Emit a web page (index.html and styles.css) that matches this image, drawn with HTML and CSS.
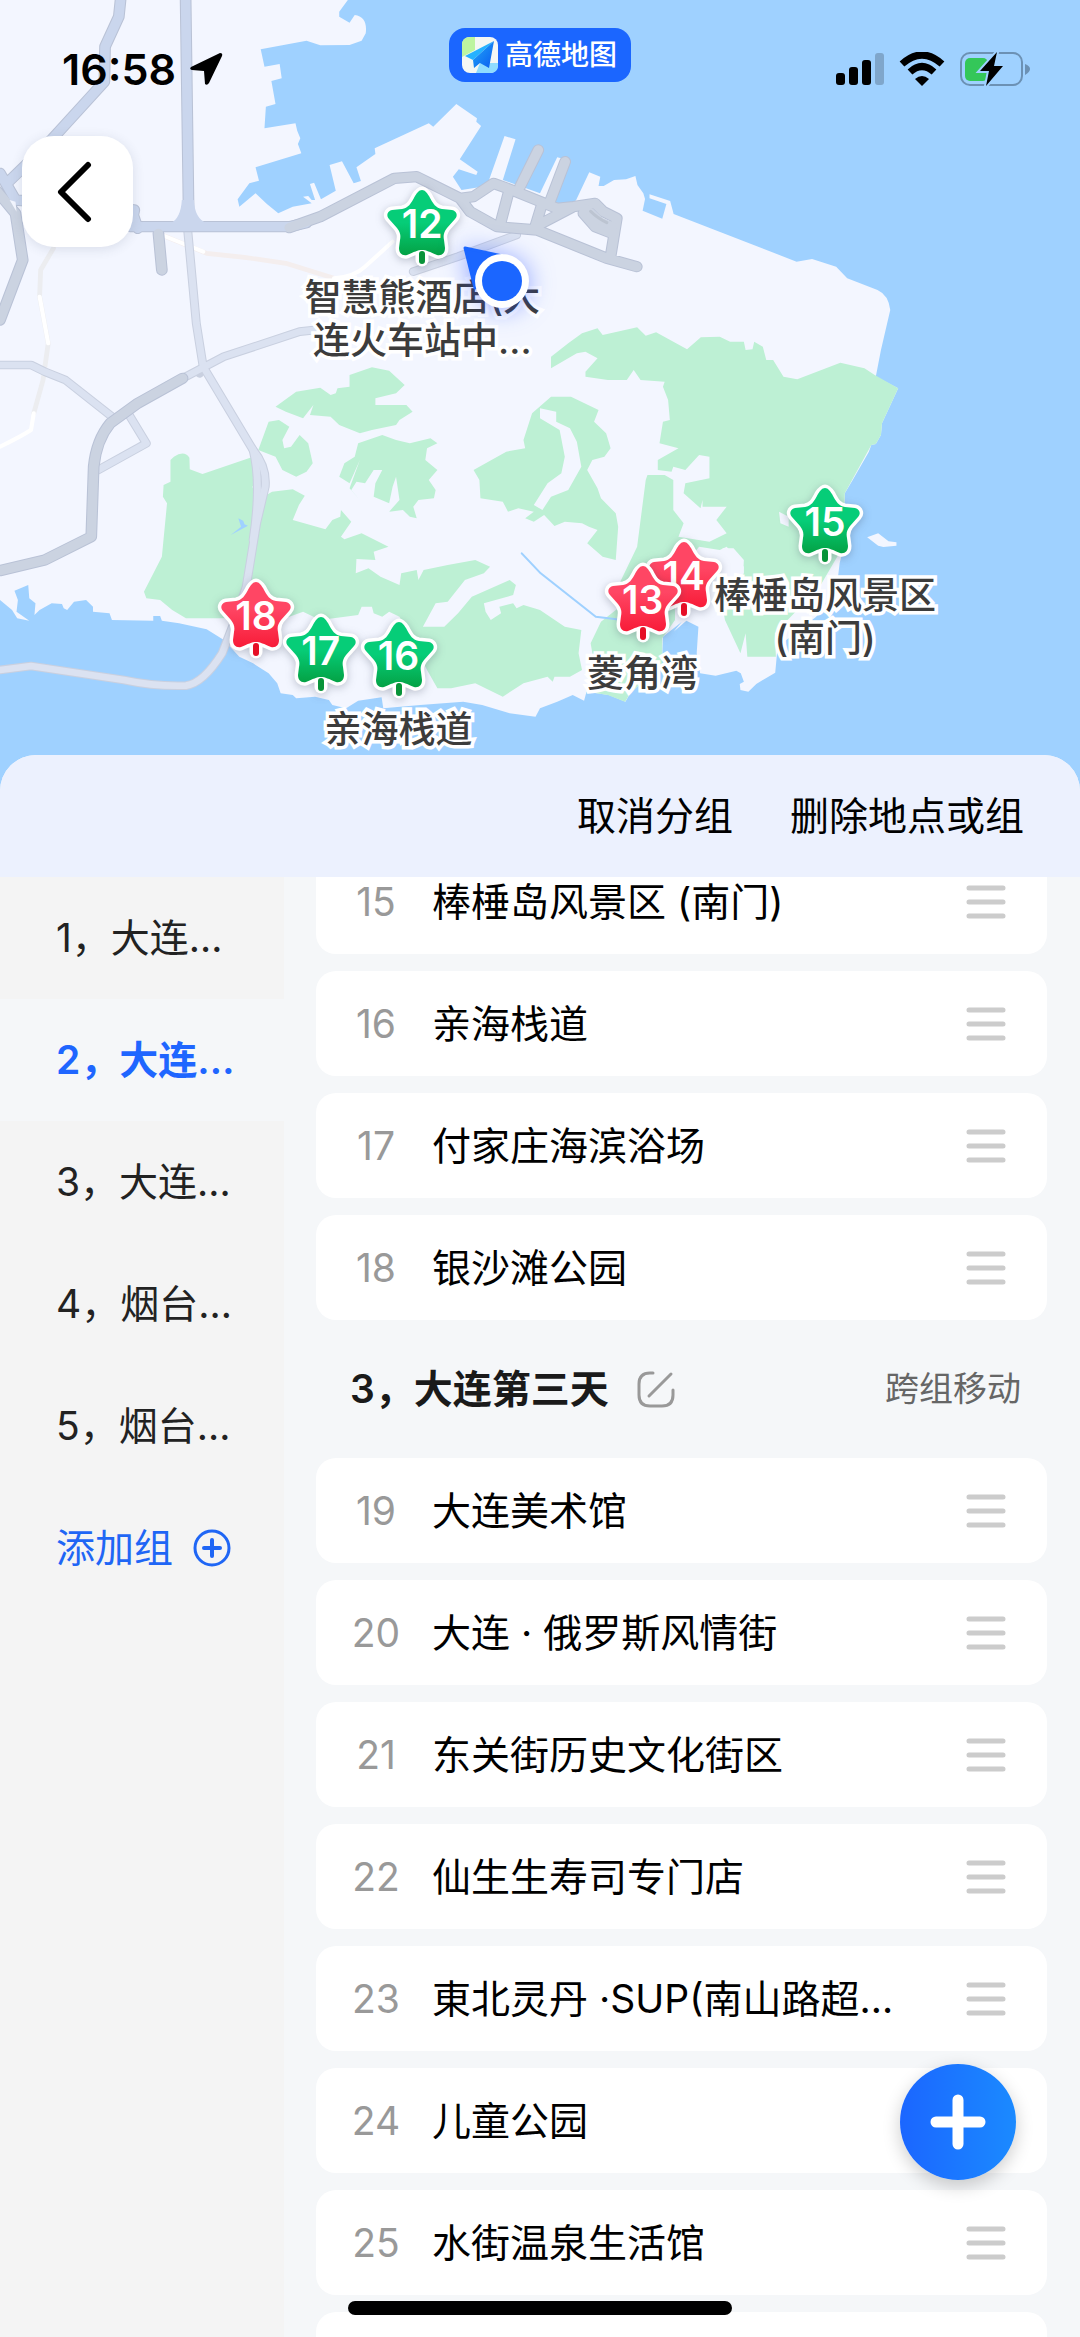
FILE: index.html
```html
<!DOCTYPE html>
<html lang="zh-CN">
<head>
<meta charset="utf-8">
<meta name="viewport" content="width=device-width, initial-scale=1">
<title>高德地图</title>
<link rel="stylesheet" href="styles.css">
</head>
<body>
<svg class="defs" aria-hidden="true">
  <defs>
    <linearGradient id="green" x1="0" y1="0" x2="0" y2="1"><stop offset=".5" stop-color="#06cd78"/><stop offset="1" stop-color="#04a245"/></linearGradient>
    <linearGradient id="red" x1="0" y1="0" x2="0" y2="1"><stop offset=".4" stop-color="#ff4664"/><stop offset="1" stop-color="#f81c38"/></linearGradient>
    <linearGradient id="plane" x1="0" y1="0" x2="1" y2="1"><stop offset="0" stop-color="#20a8f8"/><stop offset="1" stop-color="#0b5cf0"/></linearGradient>
    <path id="star" d="M42 6C45 6 47 9 49 12C53 20 56 24 62 25L72 26C77 27 78 32 75 35L67 44C64 48 63 51 64 56L65 64C65 69 62 72 57 71C50 68 46 66 42 66C38 66 34 68 27 71C22 72 19 69 19 64L20 56C21 51 20 48 17 44L9 35C6 32 7 27 12 26L22 25C28 24 31 20 35 12C37 9 39 6 42 6Z"/>
    <symbol id="pin-green" viewBox="0 0 84 88">
      <path d="M42 68V76" stroke="#fff" stroke-width="13" stroke-linecap="round"/>
      <use href="#star" fill="#fff" stroke="#fff" stroke-width="7"/>
      <path d="M42 70V77" stroke="#089339" stroke-width="6" stroke-linecap="round"/>
      <use href="#star" fill="url(#green)"/>
    </symbol>
    <symbol id="pin-red" viewBox="0 0 84 88">
      <path d="M42 68V76" stroke="#fff" stroke-width="13" stroke-linecap="round"/>
      <use href="#star" fill="#fff" stroke="#fff" stroke-width="7"/>
      <path d="M42 70V77" stroke="#e60f26" stroke-width="6" stroke-linecap="round"/>
      <use href="#star" fill="url(#red)"/>
    </symbol>
    <symbol id="handle" viewBox="0 0 40 34"><path d="M3 3H37M3 17H37M3 31H37" stroke="#ccc" stroke-width="5" stroke-linecap="round"/></symbol>
  </defs>
</svg>
<div class="app">
  <section class="map" aria-label="地图">
    <svg class="terrain" viewBox="0 0 1080 790" preserveAspectRatio="xMidYMin slice" aria-hidden="true">
      <g transform="scale(.34439 .33333)" fill="none" stroke-linejoin="round" stroke-linecap="round">
        <path fill="#f3f6ff" d="M0 0H1010L985 35V50L1015 68L1030 45Q1068 50 1062 100L1050 122L1015 135L930 136L890 122L757 148L768 200L812 192L818 235L788 243L800 312L772 320L768 385L858 370L863 392L872 415L865 432L875 460L742 502L752 542L724 550L690 598L695 620L742 580L775 612L808 640L850 620L905 610L880 590L895 588L905 600H915L900 552L912 548L932 598L975 572L957 495L993 484L1027 550L1048 543L1035 502L1090 462L1088 445L1245 370L1258 380L1325 312L1385 355L1383 365L1397 378L1335 478L1387 515L1383 525L1332 508L1315 530L1340 570L1400 560L1420 540L1465 408L1497 418L1460 540L1568 580L1618 472L1640 478L1613 605L1648 625L1673 600L1711 517L1743 530L1738 558H1753L1783 540L1818 538L1845 528L1851 555L1868 580L1873 597L1866 632L1923 656L1935 612L1886 595V583L1946 603L1956 642L2313 785L2358 777L2428 800L2460 835L2548 870Q2580 885 2585 930L2558 1050L2543 1130L2608 1165L2561 1270L2558 1305L2543 1332L2530 1335L2523 1355L2476 1440L2453 1480L2450 1640L2438 1690L2430 1760L2370 1850L2258 1940L2251 2018L2196 2052L2173 2075L2150 2070L2148 2052L2160 2045L2151 2020L2138 2012L2078 2027L2033 2020L2023 1960L2028 1880L1993 1862L1956 1895L1980 1865L1925 1910L1922 1990L1830 2080L1816 2105L1768 2085L1703 2075L1696 2102L1663 2085L1618 2105L1568 2125L1555 2150L1480 2140L1400 2115L1345 2105L1220 2115L1113 2125L1108 2092L1040 2102L1005 2125L965 2115L955 2100L915 2090L860 2095L850 2085L815 2080L805 2050L780 2020L735 1990L695 1970L650 1920L600 1888L520 1870L470 1862L465 1848H445V1862L325 1860L318 1840L270 1835V1820L250 1800L215 1805L195 1830L185 1825L180 1812L150 1810L115 1830L100 1845L103 1810L85 1795L82 1755L42 1772L52 1800L48 1835L85 1862L50 1855L35 1830L0 1800Z"/>
        <path fill="#f3f6ff" d="M2518 1612L2550 1600L2580 1624L2603 1627V1637L2565 1641L2550 1637Z"/>
        <g fill="#bdf0d4">
          <path d="M495 1380L505 1370Q535 1350 550 1373L551 1408L588 1422L735 1370L750 1400L740 1450L733 1460L740 1480L765 1490L790 1475L850 1468L885 1487L868 1515L850 1560L945 1588L965 1560L988 1550L990 1530L1020 1565L990 1610L1000 1618L1050 1600L1128 1640L1085 1655L1090 1680L1035 1677L1033 1720L1070 1705L1105 1730L1160 1755L1165 1720L1210 1710L1215 1740L1230 1710L1300 1695L1380 1680L1423 1700L1405 1720L1350 1740L1300 1805L1265 1810L1228 1880H1290L1330 1840L1370 1790L1480 1740L1498 1755L1490 1785L1405 1810L1410 1835L1425 1860L1455 1840L1450 1820L1490 1810L1500 1825L1520 1815L1568 1830L1640 1880L1688 1890L1680 1960L1690 2010L1655 2030H1610L1605 2045L1590 2030L1520 2050L1460 2090L1380 2050L1310 2065H1270L1240 2010L1160 1850L1130 1835L1110 1850L1085 1840L1080 1820H1050L1040 1845L930 1860L880 1835L840 1850L640 1855H540L500 1830L465 1800L425 1795L418 1775L470 1670L485 1510L473 1490L475 1455L495 1445Z"/>
          <path d="M780 1265L810 1260L840 1280L820 1320L825 1345L845 1340L870 1305L895 1330L908 1390L890 1415L860 1430L820 1410L800 1370L750 1350Z"/>
          <path d="M800 1220L860 1175L930 1163L960 1185L975 1180L980 1165L1015 1160V1125L1080 1102L1130 1112L1175 1155L1150 1180L1090 1195V1215H1180L1198 1235L1160 1260L1150 1275L1080 1290L1045 1300L985 1275L960 1250L900 1245L910 1215L880 1255L830 1235Z"/>
          <path d="M1040 1330L1110 1305L1150 1320L1190 1330L1250 1315L1270 1330L1240 1345L1235 1380L1270 1410L1245 1440L1265 1470L1260 1495L1215 1500L1200 1520L1210 1555L1190 1550L1170 1530L1130 1535L1160 1500L1150 1430L1140 1460L1130 1510L1085 1490L1090 1450L1110 1410H1085L1060 1450L1035 1445L1020 1470L1045 1500L1015 1465L1045 1380L1015 1450L985 1430L1000 1390L1030 1370Z"/>
          <path d="M1375 1410L1470 1355L1525 1345L1520 1320L1545 1240L1600 1190L1658 1190L1738 1230L1725 1265L1760 1300L1773 1345L1755 1370L1720 1380L1705 1410L1735 1465L1745 1495L1788 1540L1795 1580L1788 1680L1750 1670L1705 1630L1735 1590L1710 1580L1690 1570L1640 1565L1610 1578L1580 1545L1550 1565L1525 1555L1550 1535L1505 1525L1475 1535L1460 1505L1395 1495L1392 1440Z"/>
          <path d="M1600 1070L1650 1030L1690 1000L1735 985L1750 1005L1850 982L1875 1007L1905 997L1995 1048L2035 1012L2090 1010L2120 1025H2160L2165 1050L2185 1048L2190 1025L2215 1040L2225 1080H2245L2275 1130L2315 1138L2440 1088L2510 1105L2540 1125L2608 1165L2561 1270L2558 1305L2543 1332L2530 1335L2453 1480L2448 1640L2380 1760L2250 1900L2253 1970H2170L2165 1900L2150 1960L2105 1860L2095 1800L2160 1720V1700L2110 1640L2090 1650L2030 1640L1990 1690L1880 1850L1780 1790L1850 1640L1875 1440L1880 1425H1930L1955 1440V1530L1985 1570L1970 1610L2060 1625L2110 1600L2080 1560L2110 1520L2040 1520V1500L2034 1525L1985 1480L1990 1450L2060 1435V1370L2030 1365L1990 1410L1955 1400L1950 1415L1910 1410V1380L1970 1345L1915 1330L1925 1265L1945 1260L1940 1200L1925 1160L1930 1145L1860 1140L1840 1110L1820 1140H1765L1700 1130V1115L1735 1075L1700 1055L1675 1060L1600 1105Z"/>
          <path d="M1715 1930L1745 1865L1850 1780H1960V1860L1923 1915V1990L1830 2080L1815 2105L1765 2085L1705 2075L1725 1990Z"/>
        </g>
        <path fill="#f3f6ff" d="M1568 1225L1615 1235V1265L1655 1285L1675 1325L1688 1400L1650 1470L1600 1490L1575 1530L1550 1515L1590 1450L1630 1420L1640 1370L1625 1290L1568 1255ZM2098 1645L2130 1645L2160 1680L2158 1720L2110 1720ZM2262 1535L2290 1550V1580L2266 1570Z"/>
        <path fill="#9fd1ff" d="M670 1605L700 1580L692 1555L706 1562L710 1573L720 1577Z"/>
        <path stroke="#9fd1ff" stroke-width="6" d="M1515 1660L1570 1720L1730 1850L1790 1858"/>
        <path stroke="#f4eeee" stroke-width="14" d="M470 705L600 760L710 772L830 790L970 835"/>
        <path stroke="#ecedf0" stroke-width="14" d="M155 745L118 810L115 890L140 1030L125 1140L98 1240"/>
        <path stroke="#fff" stroke-width="12" d="M970 835Q1030 830 1060 800L1140 725M98 1240L90 1290Q60 1310 0 1340M470 705L590 755M115 890L140 1030"/>
        <g stroke="#c9d0e0" stroke-width="26">
          <path d="M545 690L570 970L590 1100L735 1350Q775 1400 770 1460L745 1570L715 1760L690 1840L645 1960Q590 2050 540 2057Q450 2060 360 2040L90 1998L0 2010"/>
          <path d="M530 1135L650 1070L870 995L960 985M1200 815L1330 770L1500 705M0 1095L90 1095L130 1115L190 1140L325 1250M375 1245L425 1330L285 1410M735 1350Q760 1450 735 1620M590 1100L580 1120"/>
        </g>
        <g stroke="#dbe2f1" stroke-width="20">
          <path d="M545 690L570 970L590 1100L735 1350Q775 1400 770 1460L745 1570L715 1760L690 1840L645 1960Q590 2050 540 2057Q450 2060 360 2040L90 1998L0 2010"/>
          <path d="M530 1135L650 1070L870 995L960 985M1200 815L1330 770L1500 705M0 1095L90 1095L130 1115L190 1140L325 1250M375 1245L425 1330L285 1410M735 1350Q760 1450 735 1620"/>
        </g>
        <g stroke="#b9c2d6" stroke-width="34">
          <path d="M350 0L345 50L305 140L303 245L140 430L20 550M539 0L548 660M0 520L45 600L390 630L380 680H840L890 668M-20 560L45 640L66 780L0 960M385 640L400 685"/>
          <path d="M530 1135L400 1210L320 1270Q280 1320 272 1400L265 1610L130 1680L0 1712M460 700L470 810"/>
          <path d="M840 683L930 650L1145 535L1210 530L1278 565L1336 595L1375 590L1433 550L1486 570L1617 625L1665 620L1728 610L1752 635L1791 655L1772 775M1336 595L1365 635L1443 680L1559 690L1762 775L1849 800M1563 450L1510 560M1641 485L1597 605M1476 580L1452 675M1573 615L1554 680L1665 620M1694 640L1728 680L1777 700"/>
        </g>
        <g stroke="#cad6ed" stroke-width="28">
          <path d="M350 0L345 50L305 140L303 245L140 430L20 550M539 0L548 660M0 520L45 600L390 630L380 680H840L890 668M385 640L400 685"/>
        </g>
        <path fill="#cad6ed" d="M528 600H563Q565 655 600 670H495Q525 655 528 600Z"/>
        <g stroke="#cbd3e1" stroke-width="28">
          <path d="M-20 560L45 640L66 780L0 960M460 700L470 810M530 1135L400 1210L320 1270Q280 1320 272 1400L265 1610L130 1680L0 1712"/>
          <path d="M840 683L930 650L1145 535L1210 530L1278 565L1336 595L1375 590L1433 550L1486 570L1617 625L1665 620L1728 610L1752 635L1791 655L1772 775M1336 595L1365 635L1443 680L1559 690L1762 775L1849 800M1563 450L1510 560M1641 485L1597 605M1476 580L1452 675M1573 615L1554 680L1665 620M1694 640L1728 680L1777 700"/>
        </g>
        <path stroke="#cbd3e1" stroke-width="24" d="M1700 625L1745 665L1780 680"/>
        <path stroke="#bcc4d1" stroke-width="9" d="M1715 634Q1735 655 1762 668"/>
        <path fill="#f3f6ff" d="M28 600L45 605L48 635Z"/>
      </g>
    </svg>

    <div class="pin" style="left:63.3%;top:536px"><svg class="pin-icon"><use href="#pin-red"/></svg><span class="pin-number">14</span></div>
    <div class="pin" style="left:59.5%;top:560px"><svg class="pin-icon"><use href="#pin-red"/></svg><span class="pin-number">13</span><span class="pin-label">菱角湾</span></div>
    <div class="pin" style="left:76.4%;top:482px"><svg class="pin-icon"><use href="#pin-green"/></svg><span class="pin-number">15</span><span class="pin-label">棒棰岛风景区<br>(南门)</span></div>
    <div class="pin" style="left:23.7%;top:576px"><svg class="pin-icon"><use href="#pin-red"/></svg><span class="pin-number">18</span></div>
    <div class="pin" style="left:29.7%;top:611px"><svg class="pin-icon"><use href="#pin-green"/></svg><span class="pin-number">17</span></div>
    <div class="pin" style="left:36.9%;top:616px"><svg class="pin-icon"><use href="#pin-green"/></svg><span class="pin-number">16</span><span class="pin-label">亲海栈道</span></div>
    <div class="pin" style="left:39.1%;top:184px"><svg class="pin-icon"><use href="#pin-green"/></svg><span class="pin-number">12</span><span class="pin-label">智慧熊酒店(大<br>连火车站中…</span></div>
    <svg class="me" viewBox="0 0 110 110" style="left:46.5%;top:226px" aria-label="我的位置">
      <path d="M18 22L60 31L28 62Z" fill="#1b66ff" stroke="#1b66ff" stroke-width="3" stroke-linejoin="round"/>
      <circle cx="55" cy="55" r="27" fill="#fff"/><circle cx="55" cy="55" r="20" fill="#1b66ff"/>
    </svg>

    <header class="status">
      <div class="status-left"><time>16:58</time>
        <svg width="34" height="34" viewBox="0 0 34 34"><path d="M31 1Q34 1 33 4L20 31Q18 34 16 32L15 19L3 18Q0 17 2 15Z"/></svg>
      </div>
      <div class="brand">
        <svg width="36" height="36" viewBox="0 0 36 36"><rect width="36" height="36" rx="8" fill="#f4f7f4"/><path d="M8 0H13V13L0 20V8Q0 0 8 0Z" fill="#bdf5a0"/><path d="M18 26H36V28Q36 36 28 36H14Z" fill="#8fdcff"/><path d="M32 4L3 19L11 23Z" fill="#25b2ff"/><path d="M32 4L11 23L12 31L18 26L27 31Z" fill="url(#plane)"/></svg>
        <span>高德地图</span>
      </div>
      <div class="status-right">
        <svg width="48" height="32" viewBox="0 0 48 32"><rect y="20" width="9" height="12" rx="3"/><rect x="13" y="14" width="9" height="18" rx="3"/><rect x="26" y="7" width="9" height="25" rx="3"/><rect x="39" width="9" height="32" rx="3" fill="#7fa6cb"/></svg>
        <svg width="46" height="34" viewBox="0 0 46 34"><path d="M23 34L16 27Q23 21 30 27Z"/><path d="M3 12Q23-6 43 12M11 20Q23 9 35 20" fill="none" stroke="#000" stroke-width="7"/></svg>
        <svg width="70" height="36" viewBox="0 0 70 36"><rect x="1" y="2" width="61" height="32" rx="9" fill="none" stroke="#6c91b4" stroke-width="2"/><path d="M65 13Q70 15 70 18T65 24Z" fill="#6c91b4"/><rect x="5" y="7" width="23" height="23" rx="5" fill="#34c759"/><path d="M37 1L20 20H29L26 35L43 15H34Z" stroke="#9fd1ff" stroke-width="4" paint-order="stroke"/></svg>
      </div>
    </header>
    <button class="back" aria-label="返回"><svg width="36" height="62" viewBox="0 0 36 62"><path d="M32 4L5 31L32 58" fill="none" stroke="#000" stroke-width="6" stroke-linecap="round" stroke-linejoin="round"/></svg></button>
  </section>

  <main class="sheet">
    <div class="toolbar"><button>取消分组</button><button>删除地点或组</button></div>
    <div class="content">
      <nav class="groups">
        <a href="#g1">1，大连…</a>
        <a href="#g2" class="current">2，大连…</a>
        <a href="#g3">3，大连…</a>
        <a href="#g4">4，烟台…</a>
        <a href="#g5">5，烟台…</a>
        <button class="add-group">添加组<svg width="38" height="38" viewBox="0 0 38 38"><path d="M11 19H27M19 11V27" stroke="#1f66f5" stroke-width="4" stroke-linecap="round"/><circle cx="19" cy="19" r="17" fill="none" stroke="#1f66f5" stroke-width="3"/></svg></button>
      </nav>
      <div class="places">
        <ul id="g2">
          <li><span class="num">15</span><span class="name">棒棰岛风景区 (南门)</span><svg class="handle"><use href="#handle"/></svg></li>
          <li><span class="num">16</span><span class="name">亲海栈道</span><svg class="handle"><use href="#handle"/></svg></li>
          <li><span class="num">17</span><span class="name">付家庄海滨浴场</span><svg class="handle"><use href="#handle"/></svg></li>
          <li><span class="num">18</span><span class="name">银沙滩公园</span><svg class="handle"><use href="#handle"/></svg></li>
        </ul>
        <div class="group-head">
          <h2>3，大连第三天</h2>
          <button class="edit" aria-label="编辑"><svg width="38" height="38" viewBox="0 0 38 38"><path d="M16 3H13Q2 3 2 14V25Q2 36 13 36H25Q36 36 36 25V20M34 4L12 26" fill="none" stroke="#999" stroke-width="3" stroke-linecap="round"/></svg></button>
          <button class="move">跨组移动</button>
        </div>
        <ul id="g3">
          <li><span class="num">19</span><span class="name">大连美术馆</span><svg class="handle"><use href="#handle"/></svg></li>
          <li><span class="num">20</span><span class="name">大连 · 俄罗斯风情街</span><svg class="handle"><use href="#handle"/></svg></li>
          <li><span class="num">21</span><span class="name">东关街历史文化街区</span><svg class="handle"><use href="#handle"/></svg></li>
          <li><span class="num">22</span><span class="name">仙生生寿司专门店</span><svg class="handle"><use href="#handle"/></svg></li>
          <li><span class="num">23</span><span class="name">東北灵丹 ·SUP(南山路超…</span><svg class="handle"><use href="#handle"/></svg></li>
          <li><span class="num">24</span><span class="name">儿童公园</span><svg class="handle"><use href="#handle"/></svg></li>
          <li><span class="num">25</span><span class="name">水街温泉生活馆</span><svg class="handle"><use href="#handle"/></svg></li>
          <li></li>
        </ul>
      </div>
    </div>
  </main>
  <button class="fab" aria-label="添加地点"><svg width="56" height="56" viewBox="0 0 56 56"><path d="M28 6V50M6 28H50" stroke="#fff" stroke-width="11" stroke-linecap="round"/></svg></button>
  <div class="home-bar"></div>
</div>
</body>
</html>
```
FILE: styles.css
```css
* { box-sizing: border-box; }
body {
  margin: 0;
  font-family: Inter, "Noto Sans CJK SC", sans-serif;
  font-size: 39px;
  line-height: 56px;
  color: #000;
}
button {
  margin: 0;
  padding: 0;
  border: 0;
  background: none;
  font: inherit;
  color: inherit;
}
svg { display: block; flex: none; }
.defs { position: absolute; width: 0; height: 0; }
.app {
  position: relative;
  display: flex;
  flex-direction: column;
  height: 100vh;
  overflow: hidden;
  background: #9fd1ff;
}

/* Map */
.map { position: relative; flex: 0 0 755px; }
.terrain { position: absolute; top: 0; left: 0; width: 100%; height: 790px; }
.pin {
  position: absolute;
  width: 84px;
  height: 88px;
  margin-left: -42px;
}
.pin-icon {
  width: 84px;
  height: 88px;
  overflow: visible;
  filter: drop-shadow(0 2px 4px rgba(60, 70, 90, .3));
}
.pin-number {
  position: absolute;
  top: 20px;
  left: 0;
  width: 100%;
  text-align: center;
  font-size: 39px;
  font-weight: 600;
  line-height: 40px;
  color: #fff;
}
.pin-label {
  position: absolute;
  top: 92px;
  left: 50%;
  transform: translateX(-50%);
  text-align: center;
  white-space: nowrap;
  font-size: 37px;
  font-weight: 500;
  line-height: 43px;
  color: #3c3c3c;
  -webkit-text-stroke: 7px #fff;
  paint-order: stroke fill;
}
.me {
  position: absolute;
  width: 110px;
  height: 110px;
  margin-left: -55px;
  filter: drop-shadow(0 2px 12px rgba(40, 80, 255, .5));
}
.status {
  position: relative;
  display: grid;
  grid-template-columns: 1fr auto 1fr;
  padding: 28px 50px 0;
}
.status-left {
  display: flex;
  align-items: center;
  gap: 13px;
  height: 82px;
  padding-left: 12px;
  font-size: 43px;
  font-weight: 600;
}
.status-right {
  display: flex;
  align-items: center;
  justify-content: flex-end;
  gap: 15px;
  height: 82px;
}
.brand {
  display: flex;
  align-items: center;
  gap: 7px;
  height: 54px;
  padding: 0 14px 0 13px;
  border-radius: 16px;
  background: #1b66ff;
  color: #fff;
  font-size: 28px;
  font-weight: 500;
}
.back {
  position: relative;
  display: flex;
  align-items: center;
  justify-content: center;
  width: 111px;
  height: 111px;
  margin: 26px 0 0 22px;
  padding-right: 8px;
  border-radius: 32px;
  background: #fff;
  box-shadow: 0 2px 12px rgba(60, 70, 100, .14);
}

/* Sheet */
.sheet {
  position: relative;
  flex: 1;
  min-height: 0;
  display: flex;
  flex-direction: column;
  border-radius: 36px 36px 0 0;
  overflow: hidden;
  background: #f5f7f9;
}
.toolbar {
  flex: none;
  display: flex;
  align-items: center;
  justify-content: flex-end;
  gap: 57px;
  height: 122px;
  padding-right: 56px;
  background: #ecf1fe;
}
.content { flex: 1; min-height: 0; display: flex; }
.groups {
  flex: 0 0 284px;
  display: flex;
  flex-direction: column;
  background: #f4f4f4;
  color: #222;
}
.groups > * {
  display: flex;
  align-items: center;
  height: 122px;
  padding-left: 56px;
  color: inherit;
  text-decoration: none;
  white-space: nowrap;
}
.groups .current { background: #f5f7f9; color: #1f66ff; font-weight: 600; }
.groups .add-group { gap: 20px; color: #1f66f5; }
.places { flex: 1; min-width: 0; padding: 0 33px 0 32px; overflow: hidden; }
.places ul {
  display: flex;
  flex-direction: column;
  gap: 17px;
  margin: 0;
  padding: 0;
  list-style: none;
}
/* the list is scrolled a little under the toolbar */
.places ul:first-child { margin-top: -28px; }
.places li {
  display: flex;
  align-items: center;
  height: 105px;
  padding: 0 41px 0 30px;
  border-radius: 20px;
  background: #fff;
}
.num { flex: 0 0 60px; text-align: center; color: #999; }
.name { flex: 1; min-width: 0; margin-left: 26px; white-space: nowrap; }
.handle { width: 40px; height: 34px; }
.group-head {
  display: flex;
  align-items: center;
  height: 138px;
  padding: 0 26px 0 34px;
}
.group-head h2 { margin: 0; font-size: 39px; font-weight: 600; color: #1a1a1a; }
.edit { margin-left: 28px; }
.move { margin-left: auto; font-size: 34px; color: #666; }

.fab {
  position: absolute;
  right: 64px;
  bottom: 157px;
  display: flex;
  align-items: center;
  justify-content: center;
  width: 116px;
  height: 116px;
  border-radius: 50%;
  background: linear-gradient(90deg, #1b66ff, #1b8aff);
  box-shadow: 0 6px 18px rgba(0, 0, 0, .2);
}
.home-bar {
  position: absolute;
  left: 50%;
  bottom: 22px;
  width: 384px;
  height: 14px;
  margin-left: -192px;
  border-radius: 7px;
  background: #000;
}
```
